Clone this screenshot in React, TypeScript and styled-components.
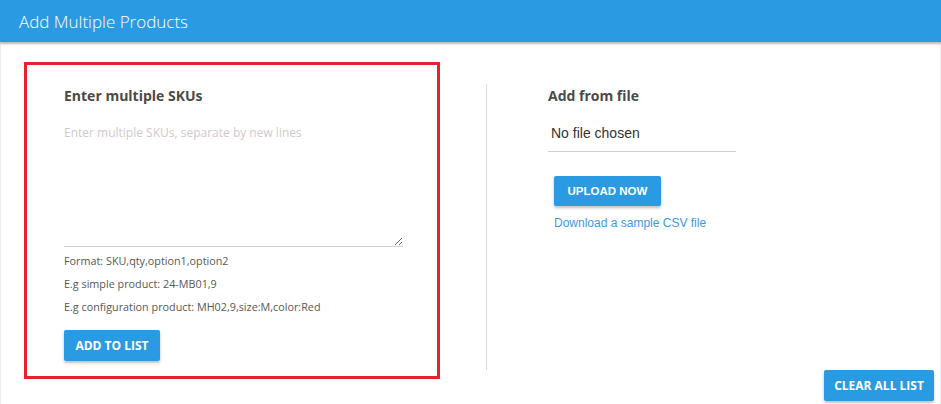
import React from 'react';
import styled, { createGlobalStyle } from 'styled-components';

const GlobalStyle = createGlobalStyle`
    html, body {
        margin: 0;
        padding: 0;
        background: #fff;
    }
    body {
        font-family: 'Open Sans', 'Liberation Sans', sans-serif;
        color: #444;
    }
`;

const Page = styled.div`
    width: 941px;
    height: 404px;
    overflow: hidden;
    display: flex;
    flex-direction: column;
`;

const Header = styled.header`
    height: 42px;
    flex-shrink: 0;
    display: flex;
    align-items: center;
    padding-left: 19px;
    background: #2a9be3;
    box-shadow: 0 2px 2px rgba(0, 0, 0, 0.28);
    position: relative;
    z-index: 1;
`;

const Title = styled.h1`
    margin: 0;
    font-size: 17px;
    font-weight: 300;
    color: #fff;
`;

const Card = styled.main`
    flex: 1;
    border-left: 1px solid #ececec;
    border-right: 1px solid #ececec;
    padding: 20px 6px 0 23px;
    display: flex;
    align-items: flex-start;
`;

const SkuColumn = styled.section`
    width: 416px;
    box-sizing: border-box;
    border: 3px solid #e4222b;
    padding: 21px 36px 15px 37px;
    display: flex;
    flex-direction: column;
    align-items: flex-start;
`;

const SectionTitle = styled.h2`
    margin: 0;
    font-size: 14px;
    line-height: 19px;
    font-weight: 700;
    color: #4a4a4a;
`;

const SkuInput = styled.textarea`
    margin-top: 19px;
    width: 339px;
    height: 123px;
    box-sizing: border-box;
    padding: 0;
    border: none;
    border-bottom: 1px solid #cfcfcf;
    outline: none;
    resize: vertical;
    font-family: 'Open Sans', sans-serif;
    font-size: 12px;
    line-height: 18px;
    color: #444;
    &::placeholder {
        color: #d3c8c8;
    }
`;

const Hints = styled.div`
    margin-top: 2px;
`;

const Hint = styled.p`
    margin: 0;
    font-size: 10.8px;
    line-height: 23px;
    color: #575757;
`;

const Button = styled.button<{ $arial?: boolean; $width: number }>`
    width: ${p => p.$width}px;
    height: ${p => (p.$arial ? '30px' : '31px')};
    padding: 0;
    border: none;
    border-radius: 2px;
    background: #2a9be3;
    color: #fff;
    white-space: nowrap;
    text-align: center;
    font-family: ${p => (p.$arial ? "'Liberation Sans', Arial, sans-serif" : "'Open Sans', sans-serif")};
    font-size: ${p => (p.$arial ? '11.5px' : '12px')};
    font-weight: 700;
    box-shadow: 0 2px 3px rgba(0, 0, 0, 0.25);
    cursor: pointer;
`;

const AddButton = styled(Button)`
    margin-top: 12px;
`;

const Divider = styled.div`
    width: 1px;
    height: 286px;
    margin: 22px 61px 0 46px;
    background: #dcdcdc;
`;

const FileColumn = styled.section`
    flex: 1;
    padding-top: 24px;
    display: flex;
    flex-direction: column;
    align-items: flex-start;
`;

const FileBox = styled.label`
    margin-top: 20px;
    width: 188px;
    box-sizing: border-box;
    padding: 0 0 10px 3px;
    border-bottom: 1px solid #cfcfcf;
    font-family: 'Liberation Sans', Arial, sans-serif;
    font-size: 14px;
    line-height: 16px;
    color: #333;
    cursor: pointer;
    input {
        display: none;
    }
`;

const UploadButton = styled(Button)`
    margin: 24px 0 0 6px;
`;

const SampleLink = styled.a`
    margin: 10px 0 0 6px;
    font-family: 'Liberation Sans', Arial, sans-serif;
    font-size: 12px;
    line-height: 14px;
    color: #3d9ae0;
    text-decoration: none;
`;

const ClearButton = styled(Button)`
    align-self: flex-end;
    margin-top: 140px;
`;

const App: React.FC = () => {
    return (
        <>
            <GlobalStyle />
            <Page>
                <Header>
                    <Title>Add Multiple Products</Title>
                </Header>
                <Card>
                    <SkuColumn>
                        <SectionTitle>Enter multiple SKUs</SectionTitle>
                        <SkuInput placeholder="Enter multiple SKUs, separate by new lines" />
                        <Hints>
                            <Hint>Format: SKU,qty,option1,option2</Hint>
                            <Hint>E.g simple product: 24-MB01,9</Hint>
                            <Hint>E.g configuration product: MH02,9,size:M,color:Red</Hint>
                        </Hints>
                        <AddButton type="button" $width={96}>
                            ADD TO LIST
                        </AddButton>
                    </SkuColumn>
                    <Divider />
                    <FileColumn>
                        <SectionTitle>Add from file</SectionTitle>
                        <FileBox>
                            <input type="file" accept=".csv" />
                            No file chosen
                        </FileBox>
                        <UploadButton type="button" $arial $width={107}>
                            UPLOAD NOW
                        </UploadButton>
                        <SampleLink href="#">Download a sample CSV file</SampleLink>
                        <ClearButton type="button" $width={110}>
                            CLEAR ALL LIST
                        </ClearButton>
                    </FileColumn>
                </Card>
            </Page>
        </>
    );
};

export default App;
